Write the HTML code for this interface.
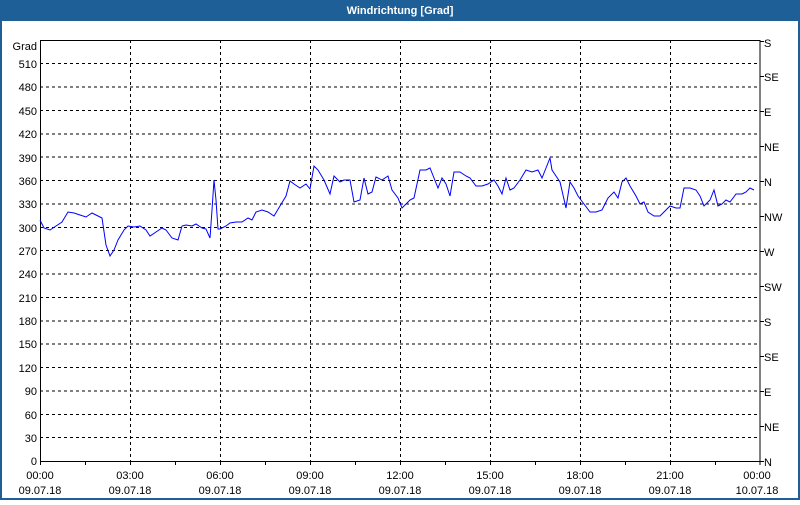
<!DOCTYPE html>
<html><head><style>
body{margin:0;width:800px;height:500px;overflow:hidden;background:#fff;font-family:"Liberation Sans",sans-serif}
</style></head><body>
<svg width="800" height="500" xmlns="http://www.w3.org/2000/svg" font-family="'Liberation Sans',sans-serif" font-size="11">
<rect x="0" y="0" width="800" height="500" fill="#fff"/>
<rect x="0" y="0" width="800" height="21" fill="#1f5f98"/>
<rect x="0" y="0" width="2" height="500" fill="#1f5f98"/>
<rect x="798" y="0" width="2" height="500" fill="#1f5f98"/>
<rect x="0" y="498" width="800" height="2" fill="#1f5f98"/>
<text x="400" y="14" fill="#fff" font-weight="bold" font-size="11" text-anchor="middle">Windrichtung [Grad]</text>
<g stroke="#000" stroke-width="1" stroke-dasharray="3,3" fill="none">
<path d="M40 63.5H760M40 87H760M40 110.5H760M40 134H760M40 157H760M40 180.5H760M40 204H760M40 227.5H760M40 250.5H760M40 274H760M40 297.5H760M40 321H760M40 344H760M40 367.5H760M40 391H760M40 414.5H760M40 437.5H760"/>
<path d="M130.5 40V461M220.5 40V461M310.5 40V461M400.5 40V461M490.5 40V461M580.5 40V461M670.5 40V461"/>
</g>
<rect x="40.5" y="40.5" width="719.5" height="421" fill="none" stroke="#000"/>
<g stroke="#000">
<path d="M85.5 461v4M175.5 461v4M265.5 461v4M355.5 461v4M445.5 461v4M535.5 461v4M625.5 461v4M715.5 461v4M40.5 461v4M130.5 461v4M220.5 461v4M310.5 461v4M400.5 461v4M490.5 461v4M580.5 461v4M670.5 461v4M760 461v4"/>
<path d="M760 41.5h4M760 76.5h4M760 111.5h4M760 146.5h4M760 181.5h4M760 216.5h4M760 251.5h4M760 286.5h4M760 321.5h4M760 356.5h4M760 391.5h4M760 426.5h4M760 461.5h4"/>
</g>
<g text-anchor="end">
<text x="37" y="50">Grad</text>
<text x="37" y="68">510</text><text x="37" y="91">480</text><text x="37" y="115">450</text><text x="37" y="138">420</text><text x="37" y="162">390</text><text x="37" y="185">360</text><text x="37" y="208">330</text><text x="37" y="232">300</text><text x="37" y="255">270</text><text x="37" y="278">240</text><text x="37" y="302">210</text><text x="37" y="325">180</text><text x="37" y="348">150</text><text x="37" y="372">120</text><text x="37" y="395">90</text><text x="37" y="419">60</text><text x="37" y="442">30</text><text x="37" y="465">0</text>
</g>
<g>
<text x="764" y="47">S</text><text x="764" y="81">SE</text><text x="764" y="116">E</text><text x="764" y="151">NE</text><text x="764" y="186">N</text><text x="764" y="221">NW</text><text x="764" y="256">W</text><text x="764" y="291">SW</text><text x="764" y="326">S</text><text x="764" y="361">SE</text><text x="764" y="396">E</text><text x="764" y="431">NE</text><text x="764" y="466">N</text>
</g>
<g text-anchor="middle">
<text x="40" y="479">00:00</text><text x="40" y="494">09.07.18</text>
<text x="130" y="479">03:00</text><text x="130" y="494">09.07.18</text>
<text x="220" y="479">06:00</text><text x="220" y="494">09.07.18</text>
<text x="310" y="479">09:00</text><text x="310" y="494">09.07.18</text>
<text x="400" y="479">12:00</text><text x="400" y="494">09.07.18</text>
<text x="490" y="479">15:00</text><text x="490" y="494">09.07.18</text>
<text x="580" y="479">18:00</text><text x="580" y="494">09.07.18</text>
<text x="670" y="479">21:00</text><text x="670" y="494">09.07.18</text>
<text x="757" y="479">00:00</text><text x="757" y="494">10.07.18</text>
</g>
<polyline fill="none" stroke="#0000ff" stroke-width="1" points="40,220 44,228 50,230 56,226 62,222 68,212 74,213 80,215 86,217 92,213 98,216 102,218 106,245 110,256 114,250 118,240 124,230 128,226 134,227 140,226 146,230 150,236 156,232 162,228 166,230 172,238 178,240 182,226 186,225 192,226 196,224 202,228 206,229 210,238 212,210 214,180 216,200 218,229 220,229 226,226 230,223 236,222 242,222 248,218 252,220 256,212 262,210 268,212 274,216 280,206 286,196 290,181 294,184 300,188 306,184 310,189 314,166 318,170 324,180 330,194 334,176 340,182 344,180 350,180 354,202 360,200 364,178 368,194 372,192 376,177 382,180 388,176 392,190 398,198 402,208 406,204 410,200 414,198 420,170 426,170 430,168 434,178 438,188 442,178 446,184 450,196 454,172 460,172 466,176 470,178 476,186 482,186 488,184 494,180 498,186 502,194 506,178 510,190 514,188 520,180 526,170 532,172 538,170 542,178 546,168 550,158 552,170 556,176 560,182 566,208 570,182 574,188 578,196 584,204 590,212 596,212 602,210 608,198 614,192 618,198 622,182 626,178 630,186 636,196 640,204 644,202 648,212 654,216 660,216 664,212 670,206 676,208 680,208 684,188 690,188 696,190 700,196 704,206 710,200 714,190 718,206 722,204 726,200 730,202 736,194 742,194 746,192 750,188 754,190"/>
</svg>
</body></html>
